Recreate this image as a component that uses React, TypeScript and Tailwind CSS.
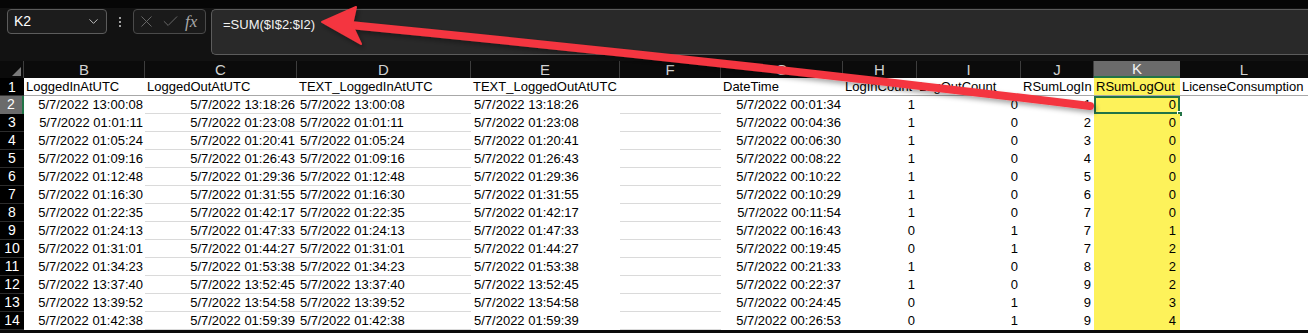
import { ChevronDown, X, Check } from 'lucide-react'

type Row = { n: number; b: string; c: string; g: string; h: number; i: number; j: number; k: number }

const rows: Row[] = [
  { n: 2, b: '13:00:08', c: '13:18:26', g: '00:01:34', h: 1, i: 0, j: 1, k: 0 },
  { n: 3, b: '01:01:11', c: '01:23:08', g: '00:04:36', h: 1, i: 0, j: 2, k: 0 },
  { n: 4, b: '01:05:24', c: '01:20:41', g: '00:06:30', h: 1, i: 0, j: 3, k: 0 },
  { n: 5, b: '01:09:16', c: '01:26:43', g: '00:08:22', h: 1, i: 0, j: 4, k: 0 },
  { n: 6, b: '01:12:48', c: '01:29:36', g: '00:10:22', h: 1, i: 0, j: 5, k: 0 },
  { n: 7, b: '01:16:30', c: '01:31:55', g: '00:10:29', h: 1, i: 0, j: 6, k: 0 },
  { n: 8, b: '01:22:35', c: '01:42:17', g: '00:11:54', h: 1, i: 0, j: 7, k: 0 },
  { n: 9, b: '01:24:13', c: '01:47:33', g: '00:16:43', h: 0, i: 1, j: 7, k: 1 },
  { n: 10, b: '01:31:01', c: '01:44:27', g: '00:19:45', h: 0, i: 1, j: 7, k: 2 },
  { n: 11, b: '01:34:23', c: '01:53:38', g: '00:21:33', h: 1, i: 0, j: 8, k: 2 },
  { n: 12, b: '13:37:40', c: '13:52:45', g: '00:22:37', h: 1, i: 0, j: 9, k: 2 },
  { n: 13, b: '13:39:52', c: '13:54:58', g: '00:24:45', h: 0, i: 1, j: 9, k: 3 },
  { n: 14, b: '01:42:38', c: '01:59:39', g: '00:26:53', h: 0, i: 1, j: 9, k: 4 },
]

const d = (t: string) => `5/7/2022 ${t}`

function ColHeader() {
  const hd = 'h-full flex items-center justify-center border-r border-[#3d3d3d]'
  return (
    <div className="flex h-[17px] bg-[#0b0b0b] text-[15px] text-[#d2d2d2] leading-none">
      <div className="w-[24px] h-full relative border-r border-[#3d3d3d]">
        <div className="absolute right-[2px] bottom-[2px] w-0 h-0 border-l-[9px] border-l-transparent border-b-[9px] border-b-[#7a7a7a]" />
      </div>
      <div className={`w-[121px] ${hd}`}>B</div>
      <div className={`w-[152px] ${hd}`}>C</div>
      <div className={`w-[174px] ${hd}`}>D</div>
      <div className={`w-[149px] ${hd}`}>E</div>
      <div className={`w-[101px] ${hd}`}>F</div>
      <div className={`w-[122px] ${hd}`}>G</div>
      <div className={`w-[74px] ${hd}`}>H</div>
      <div className={`w-[104px] ${hd}`}>I</div>
      <div className={`w-[73px] ${hd}`}>J</div>
      <div className="w-[86px] h-full flex items-center justify-center bg-[#6b6b6b] text-[#f2f2f2] border-b-2 border-[#217346]">K</div>
      <div className="w-[128px] h-full flex items-center justify-center">L</div>
    </div>
  )
}

function FieldRow() {
  const c = 'h-full pl-[2px] whitespace-nowrap overflow-hidden'
  return (
    <div className="flex h-[18px] leading-[18px]">
      <div className="w-[24px] h-full bg-black text-white text-[14px] text-center border-b border-[#333]">1</div>
      <div className="flex flex-1 bg-white text-black text-[13px] border-b border-[#a8a8a8]">
        <div className={`w-[121px] ${c}`}>LoggedInAtUTC</div>
        <div className={`w-[152px] ${c}`}>LoggedOutAtUTC</div>
        <div className={`w-[174px] ${c}`}>TEXT_LoggedInAtUTC</div>
        <div className={`w-[149px] ${c}`}>TEXT_LoggedOutAtUTC</div>
        <div className={`w-[101px] ${c}`}></div>
        <div className={`w-[122px] ${c}`}>DateTime</div>
        <div className={`w-[74px] ${c}`}>LogInCount</div>
        <div className={`w-[104px] ${c}`}>LogOutCount</div>
        <div className={`w-[73px] ${c}`}>RSumLogIn</div>
        <div className={`w-[86px] ${c} bg-[#fdf25a]`}>RSumLogOut</div>
        <div className={`w-[128px] ${c}`}>LicenseConsumption</div>
      </div>
    </div>
  )
}

function DataRow({ r }: { r: Row }) {
  const sel = r.n === 2
  const line = 'border-b border-[#dadada]'
  return (
    <div className="flex h-[18px] leading-[17px]">
      <div
        className={
          sel
            ? 'w-[24px] h-full bg-[#6b6b6b] text-white text-[14px] text-center border-r-2 border-[#217346]'
            : 'w-[24px] h-full bg-black text-white text-[14px] text-center border-b border-[#2c2c2c]'
        }
      >
        {r.n}
      </div>
      <div className="flex flex-1 bg-white text-black text-[13px] whitespace-nowrap">
        <div className="w-[121px] h-full text-right pr-[2px]">{d(r.b)}</div>
        <div className={`w-[152px] h-full text-right pr-[2px] ${line}`}>{d(r.c)}</div>
        <div className={`w-[174px] h-full pl-[3px] ${line}`}>{d(r.b)}</div>
        <div className="w-[149px] h-full pl-[3px]">{d(r.c)}</div>
        <div className={`w-[101px] h-full ${line}`}></div>
        <div className="w-[122px] h-full text-right pr-[2px]">{d(r.g)}</div>
        <div className="w-[74px] h-full text-right pr-[2px]">{r.h}</div>
        <div className="w-[104px] h-full text-right pr-[3px]">{r.i}</div>
        <div className="w-[73px] h-full text-right pr-[3px]">{r.j}</div>
        <div className="w-[86px] h-full text-right pr-[4px] bg-[#fdf25a] relative">
          {r.k}
          {sel && (
            <>
              <div className="absolute inset-0 border-2 border-[#217346]" />
              <div className="absolute right-[-3px] bottom-[-3px] w-[6px] h-[6px] bg-[#217346] border border-white" />
            </>
          )}
        </div>
        <div className="w-[128px] h-full"></div>
      </div>
    </div>
  )
}

function Arrow() {
  return (
    <svg className="absolute inset-0 pointer-events-none" width={1308} height={333} viewBox="0 0 1308 333">
      <defs>
        <filter id="sh" x="-10%" y="-50%" width="120%" height="200%">
          <feDropShadow dx="2" dy="3" stdDeviation="2.5" floodColor="#000" floodOpacity="0.35" />
        </filter>
      </defs>
      <g filter="url(#sh)" fill="#f4363f" stroke="#f4363f">
        <path d="M350 25 Q720 61 1090 106" fill="none" strokeWidth={8} strokeLinecap="round" />
        <polygon points="322,22 356,7 352,25 361,44" strokeWidth={2} strokeLinejoin="round" />
      </g>
    </svg>
  )
}

export default function App() {
  return (
    <div className="relative w-[1308px] h-[333px] overflow-hidden bg-[#0b0b0b] font-['Liberation_Sans',Arial,sans-serif]">
      <div className="h-[61px] bg-[#121212] border-t-[8px] border-[#060606] flex items-start gap-[5px] pt-[1px] pl-[7px]">
        <div className="w-[100px] h-[25px] rounded-[4px] border border-[#5c5c5c] bg-[#1c1c1c] flex items-center justify-between pl-[6px] pr-[5px] text-[14px] text-white">
          <span>K2</span>
          <ChevronDown size={15} strokeWidth={1.5} className="text-[#c8c8c8]" />
        </div>
        <div className="w-[16px] h-[25px] flex flex-col items-center justify-center gap-[2px]">
          <div className="w-[2px] h-[2px] bg-[#a0a0a0]" />
          <div className="w-[2px] h-[2px] bg-[#a0a0a0]" />
          <div className="w-[2px] h-[2px] bg-[#a0a0a0]" />
        </div>
        <div className="w-[73px] h-[25px] rounded-[4px] border border-[#4a4a4a] bg-[#1a1a1a] flex items-center gap-[5px] pl-[3px] text-[#6a6a6a]">
          <X size={19} strokeWidth={1.2} />
          <Check size={19} strokeWidth={1.2} />
          <span className="font-['Liberation_Serif',serif] italic text-[17px] text-[#a8a8a8] leading-none">fx</span>
        </div>
        <div className="flex-1 h-[46px] rounded-l-[5px] border border-r-0 border-[#5c5c5c] bg-[#292929] pl-[11px] pt-[5px] text-[13px] text-[#f2f2f2]">
          =SUM($I$2:$I2)
        </div>
      </div>
      <ColHeader />
      <FieldRow />
      {rows.map((r) => (
        <DataRow key={r.n} r={r} />
      ))}
      <Arrow />
    </div>
  )
}
